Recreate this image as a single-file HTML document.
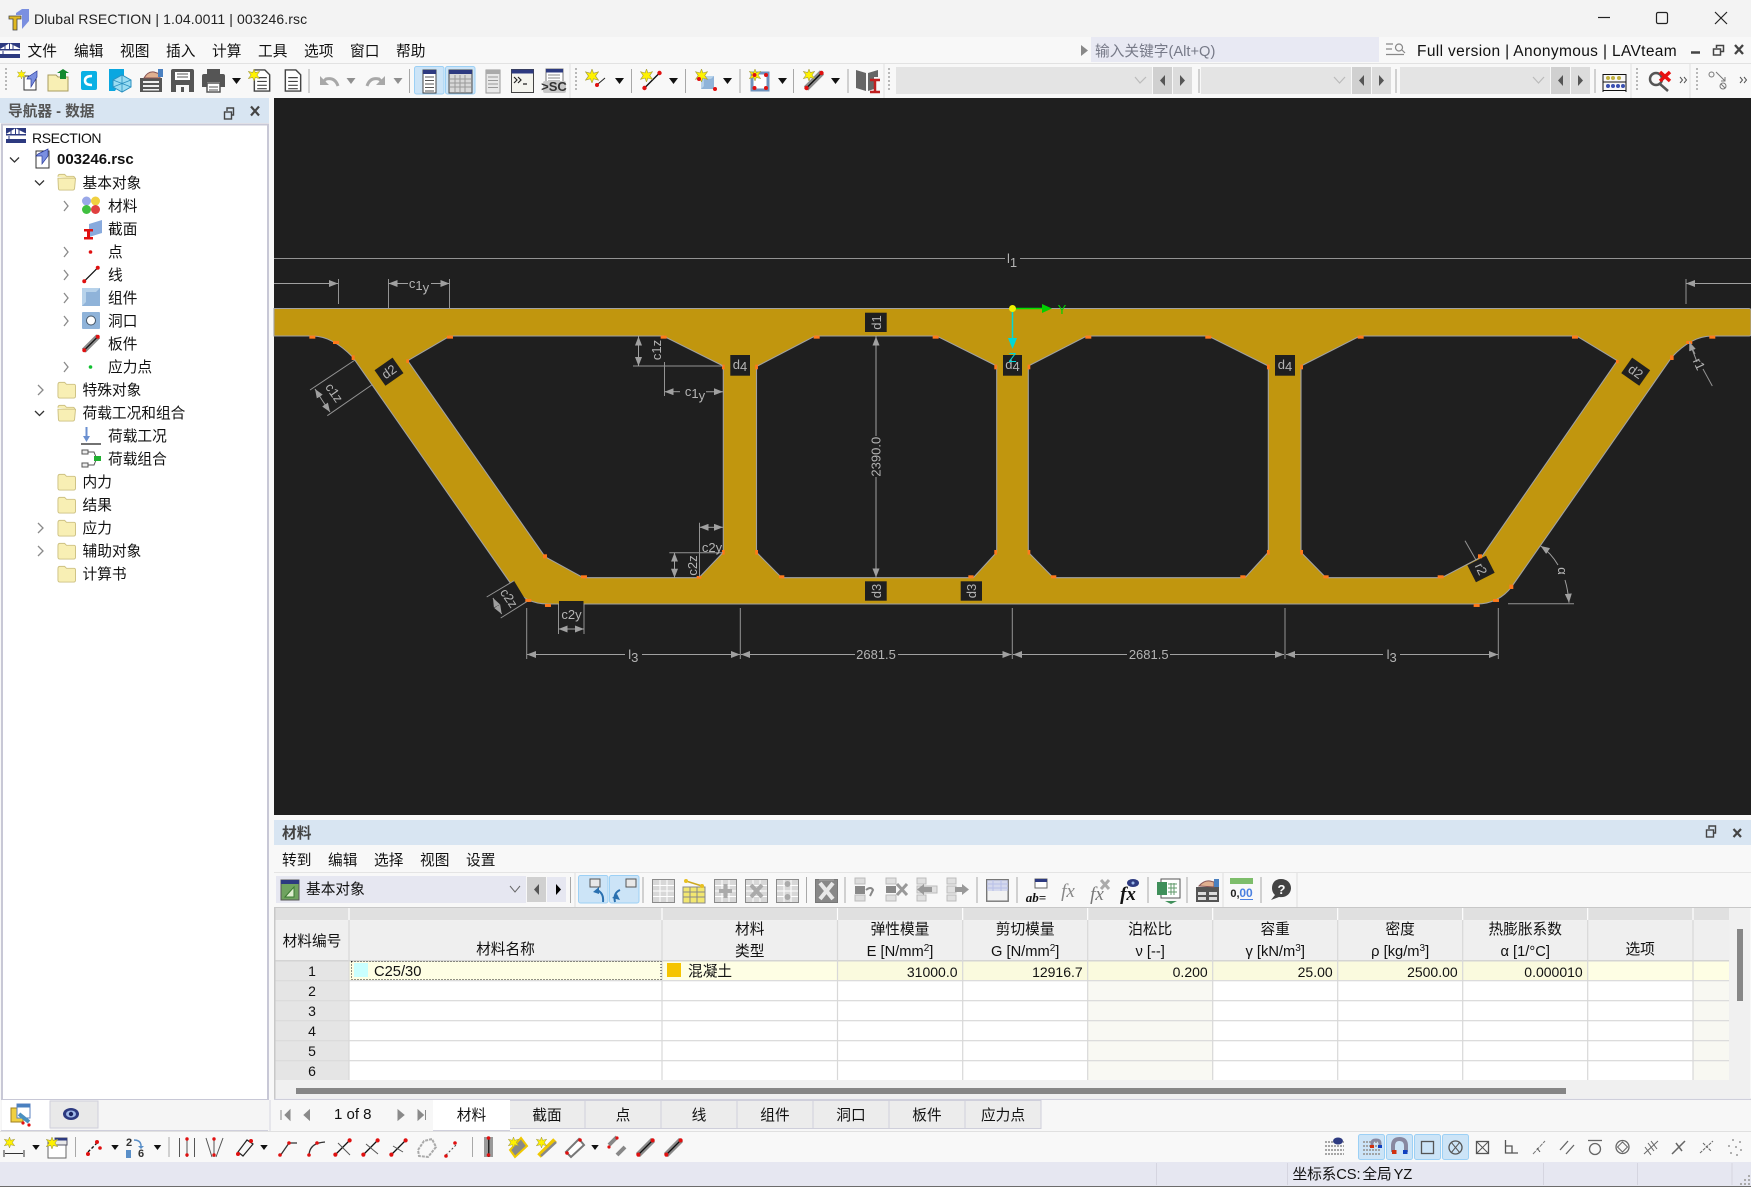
<!DOCTYPE html>
<html><head><meta charset="utf-8"><style>
html,body{margin:0;padding:0;background:#f8f8f8}
body{width:1751px;height:1187px;position:relative;overflow:hidden;font-family:"Liberation Sans","Noto Sans CJK SC",sans-serif;font-size:14.7px;color:#111}
svg.bg{position:absolute;left:0;top:0}
.t{position:absolute;white-space:nowrap;line-height:20px;height:20px;margin-top:1px}
.c{text-align:center}.r{text-align:right}
.n{font-size:14px}
.z{margin-top:0}
sup{font-size:10px;line-height:0;vertical-align:5px}
svg text{font-family:"Liberation Sans",sans-serif;fill:#b4b4b4;font-size:13px;text-anchor:middle}
.d{fill:none;stroke:#a0a0a0;stroke-width:1}
.da{fill:none;stroke:#a0a0a0;stroke-width:1;marker-end:url(#ar)}
</style></head><body>
<svg class="bg" width="1751" height="1187" viewBox="0 0 1751 1187">
<defs>
<marker id="ar" markerUnits="userSpaceOnUse" markerWidth="9" markerHeight="7" refX="9" refY="3.5" orient="auto"><path d="M0 0L9 3.5L0 7z" fill="#a0a0a0"/></marker>
<symbol id="star" viewBox="0 0 12 12"><path d="M6 0L7.3 3.6L11.5 2.5L9 6L11.5 9.5L7.3 8.4L6 12L4.7 8.4L.5 9.5L3 6L.5 2.5L4.7 3.6z" fill="#fff200" stroke="#a8a040" stroke-width=".6"/></symbol>
<symbol id="dn" viewBox="0 0 9 6"><path d="M0 0H9L4.5 6z" fill="#111"/></symbol>
<symbol id="fol" viewBox="0 0 20 18"><path d="M1 3.500Q1 1 3 1H8L10 3H18Q19.500 3 19.500 5V15.500Q19.500 17.500 17.500 17.500H3Q1 17.500 1 15.500z" fill="#f8efb4" stroke="#cdc183"/></symbol>
<symbol id="folo" viewBox="0 0 20 18"><path d="M1 3.500Q1 1 3 1H8L10 3H17Q18.500 3 18.500 5V6" fill="#f8efb4" stroke="#cdc183"/><path d="M1 5H19.500L18.500 15.500Q18.500 17.500 16.500 17.500H3Q1.500 17.500 1.500 15.500z" fill="#f8efb4" stroke="#cdc183"/></symbol>
<symbol id="br" viewBox="0 0 20 15"><rect width="20" height="15" fill="#2d3a80"/><path d="M0 6L9 .5V6zM10 .5L20 5.500V6H10zM0 7.500H20V11H0z" fill="#fff"/><path d="M5 1V6M13 1V6M3 8V11" stroke="#2d3a80"/></symbol>
<symbol id="tbl" viewBox="0 0 23 24"><rect x=".5" y=".5" width="22" height="23" fill="#d8d8d8" stroke="#8a8a8a"/><path d="M1 6.500H22M1 12H22M1 17.500H22M8 1V23M15 1V23" stroke="#fff"/></symbol>
<symbol id="doc" viewBox="0 0 18 24"><path d="M1 1H12L17 6V23H1z" fill="#fff" stroke="#444" stroke-width="1.500"/><path d="M4 9H14M4 13H14M4 17H14M4 20.500H14" stroke="#444" stroke-width="1.200"/></symbol>
<symbol id="mem" viewBox="0 0 20 20"><path d="M2 18L18 2" stroke="#111" stroke-width="1.400"/><circle cx="2.500" cy="17.500" r="2.200" fill="#e01010"/><circle cx="17.500" cy="2.500" r="2.200" fill="#e01010"/></symbol>
<symbol id="dmem" viewBox="0 0 20 20"><path d="M2 18L18 2" stroke="#8a8a8a" stroke-width="6"/><path d="M2 18L18 2" stroke="#111" stroke-width="1.400"/><circle cx="2.500" cy="17.500" r="2.200" fill="#e01010"/><circle cx="17.500" cy="2.500" r="2.200" fill="#e01010"/></symbol>
<symbol id="pw" viewBox="0 0 18 18"><rect width="18" height="18" fill="#8fb3d9"/><path d="M0 0H18L14 4H4V14L0 18z" fill="#b7d2ea"/></symbol>
</defs>

<!-- chrome -->
<rect width="1751" height="37" fill="#f3f3f3"/>
<rect y="37" width="1751" height="26" fill="#f8f8f8"/>
<rect y="63" width="1751" height="1" fill="#e2e2e2"/>
<rect x="1091" y="37" width="288" height="25" fill="#e8e9f3"/>
<path d="M1081 45L1088 50.500L1081 56z" fill="#888"/>
<!-- nav -->
<rect y="98" width="269" height="25" fill="#d8e5f2"/>
<rect x="2" y="124.500" width="266" height="975.500" fill="#fff" stroke="#c8c8d6" stroke-width="2"/>
<rect x="1" y="1100" width="268" height="31" fill="#f5f5f5"/>
<rect x="2" y="1100" width="48" height="30" fill="#fff"/>
<rect x="50" y="1101" width="48" height="27" fill="#e9e9e9" stroke="#cfcfdb"/>
<path d="M1 1130.500H268" stroke="#cfcfdb"/>
<!-- canvas -->
<rect x="274" y="98" width="1477" height="717" fill="#1f1f1f"/>
<path fill-rule="evenodd" fill="#c1960e" stroke="#a2a2a2" stroke-width="1.100" d="M274 308.500H1749Q1751 308.500 1751 311V334Q1751 336 1749 336H1712C1697 336 1684 344 1671.700 357.300L1511.700 586.700C1503 598 1492 604 1476.700 604H548C532 604 521 598 512.900 586.700L352.900 357.300C340 344 327 336 312.600 336H274Z
M407.700 360.700L450 336H663.300L723.300 366V552.300L699 577.700H583.300L545 556.700Z
M756.500 366.500L815 336H936.700L996.700 366V552.300L973.300 577.700H781.700L756.500 552.300Z
M1028.300 366L1086.700 336H1208.300L1268.300 366V552.300L1245 577.700H1053.300L1028.300 552.300Z
M1301 366L1360 336H1576.700L1617.300 360.700L1481.700 556.700L1441.700 577.700H1326L1301 552.300Z"/>
<!-- dark label boxes -->
<g fill="#1f1f1f">
<rect x="730.300" y="355" width="19.700" height="20.700"/><rect x="1003" y="355" width="19" height="20.700"/><rect x="1275" y="355" width="20" height="20.700"/>
<rect x="865" y="312.700" width="21.700" height="19.300"/><rect x="865" y="581.300" width="21.700" height="19.400"/><rect x="960.700" y="581.300" width="21.300" height="19.400"/>
<rect x="-11" y="-9.500" width="22" height="19" transform="translate(389 371.700) rotate(-35)"/>
<rect x="-11" y="-9.500" width="22" height="19" transform="translate(1635.700 371.700) rotate(35)"/>
<rect x="-10.500" y="-9.500" width="21" height="19" transform="translate(1481 569) rotate(-27)"/>
<path d="M514 580.700L526.700 601.700L500.700 618L486.700 597z"/>
<rect x="559" y="601" width="24.500" height="4"/>
</g>
<!-- orange markers -->
<g transform="translate(270 240) scale(.3333)" fill="#ff7a1c">
<rect x="118" y="287" width="18" height="9"/><rect x="189" y="303" width="18" height="9"/><rect x="245" y="346" width="9" height="14"/><rect x="409" y="358" width="8" height="11"/><rect x="531" y="287" width="18" height="9"/><rect x="1172" y="287" width="18" height="9"/><rect x="1356" y="374" width="8" height="14"/><rect x="1456" y="374" width="8" height="14"/><rect x="1456" y="930" width="8" height="14"/><rect x="1356" y="930" width="8" height="14"/><rect x="1280" y="1008" width="14" height="8"/><rect x="933" y="1006" width="18" height="9"/><rect x="819" y="943" width="12" height="12"/><rect x="766" y="1077" width="18" height="9"/><rect x="825" y="1092" width="18" height="9"/>
</g>
<g transform="translate(770 240) scale(.3333)" fill="#ff7a1c">
<rect x="131" y="287" width="18" height="9"/><rect x="488" y="287" width="18" height="9"/><rect x="673" y="374" width="8" height="14"/><rect x="773" y="374" width="8" height="14"/><rect x="946" y="287" width="18" height="9"/><rect x="1306" y="287" width="18" height="9"/><rect x="1491" y="374" width="8" height="14"/><rect x="1491" y="930" width="8" height="14"/><rect x="1411" y="1006" width="16" height="9"/><rect x="843" y="1006" width="16" height="9"/><rect x="773" y="930" width="8" height="14"/><rect x="673" y="930" width="8" height="14"/><rect x="595" y="1006" width="16" height="9"/><rect x="27" y="1006" width="16" height="9"/>
</g>
<g transform="translate(1270 240) scale(.3333)" fill="#ff7a1c">
<rect x="263" y="287" width="18" height="9"/><rect x="906" y="287" width="18" height="9"/><rect x="1038" y="360" width="8" height="10"/><rect x="91" y="374" width="8" height="14"/><rect x="91" y="930" width="8" height="14"/><rect x="160" y="1006" width="16" height="9"/><rect x="503" y="1006" width="18" height="9"/><rect x="624" y="943" width="12" height="12"/><rect x="718" y="1034" width="12" height="13"/><rect x="669" y="1077" width="18" height="9"/><rect x="611" y="1092" width="18" height="9"/><rect x="1200" y="346" width="11" height="14"/><rect x="1249" y="303" width="18" height="9"/><rect x="1318" y="287" width="18" height="9"/>
</g>
<!-- dimensions -->
<path class="d" stroke-opacity=".9" d="M274 258.500H1005M1020 258.500H1751M338.500 279V304M388.500 279V308M449.500 279V308M1686 279V304
M355 360L310 390M371.700 385L327.300 415.700M633 366H723M664.500 362V396M699.500 522.700V577M669.300 552.700H723
M526.700 608V659M740.300 608V659M1012.300 608V659M1285 608V659M1498.300 608V659M558.500 604V634M584 604V634M514 580.700L486.700 597M526.700 601.700L500.700 618
M1712.300 386L1703 369M1695 354L1691 346M1465 540.700L1476 560M1508 603.700H1574"/>
<path class="da" d="M274 283.500H338"/><path class="da" d="M1751 283.500H1686"/>
<path class="da" d="M408 283.500H388.500"/><path class="da" d="M431 283.500H449.500"/>
<path class="da" d="M322 400L315 389"/><path class="da" d="M322 400L330 412"/>
<path class="da" d="M638.500 351V336.500"/><path class="da" d="M638.500 351V366"/>
<path class="da" d="M680 391.700H664.500"/><path class="da" d="M706 391.700H723"/>
<path class="da" d="M711 527.300H699.500"/><path class="da" d="M711 527.300H723"/>
<path class="da" d="M674.500 565V552.700"/><path class="da" d="M674.500 565V577.700"/>
<path class="da" d="M497 606L493 598"/><path class="da" d="M497 606L501.700 614"/>
<path class="da" d="M571 629H558.500"/><path class="da" d="M571 629H584"/>
<path class="da" d="M876 436V336.500"/><path class="da" d="M876 477V577.500"/>
<path class="da" d="M625 654.500H527"/><path class="da" d="M642 654.500H740"/>
<path class="da" d="M855 654.500H741"/><path class="da" d="M898 654.500H1011.500"/>
<path class="da" d="M1127 654.500H1013"/><path class="da" d="M1170 654.500H1284"/>
<path class="da" d="M1383 654.500H1286"/><path class="da" d="M1400 654.500H1498"/>
<path class="da" d="M1697 362L1689.300 341.700"/>
<path class="da" d="M1558 565Q1551 553 1540.700 546"/><path class="da" d="M1565 580Q1568 590 1569 602.700"/>
<!-- axes -->
<path d="M1012.500 308.500H1044" stroke="#00e000" stroke-width="1.500"/><path d="M1042 304L1052 308.500L1042 313z" fill="#00d000"/>
<path d="M1012.500 308.500V340" stroke="#00d8d8" stroke-width="1.500"/><path d="M1008 338L1012.500 349L1017 338z" fill="#00d8d8"/>
<circle cx="1012.500" cy="308.500" r="3.500" fill="#f0f000"/>
<!-- canvas labels -->
<text x="1012" y="263" font-size="15">l<tspan dy="4" font-size="13">1</tspan></text>
<text x="419" y="288" font-size="14">c<tspan dy="2">1</tspan><tspan dy="2">y</tspan></text>
<text x="695" y="396" font-size="14">c<tspan dy="2">1</tspan><tspan dy="2">y</tspan></text>
<text x="712" y="552" font-size="14">c2y</text>
<text x="571.500" y="619" font-size="14">c2y</text>
<text transform="translate(330.600 395.300) rotate(55)" font-size="14">c1z</text>
<text transform="translate(661 350) rotate(-90)" font-size="14">c1z</text>
<text transform="translate(697 565.500) rotate(-90)" font-size="14">c2z</text>
<text transform="translate(505.300 600.600) rotate(55)" font-size="14">c2z</text>
<text transform="translate(391.600 375.400) rotate(-35)" font-size="14">d2</text>
<text transform="translate(1633.100 375.400) rotate(35)" font-size="14">d2</text>
<text transform="translate(1477 571) rotate(65)" font-size="14">r2</text>
<text transform="translate(1695 366) rotate(65)" font-size="14">r1</text>
<text transform="translate(1558 571) rotate(90)" font-size="15">α</text>
<text x="740" y="369" font-size="14">d<tspan dy="2">4</tspan></text>
<text x="1012.500" y="369" font-size="14">d<tspan dy="2">4</tspan></text>
<text x="1285" y="369" font-size="14">d<tspan dy="2">4</tspan></text>
<text transform="translate(881 322.500) rotate(-90)" font-size="14">d1</text>
<text transform="translate(881 591) rotate(-90)" font-size="14">d3</text>
<text transform="translate(976 591) rotate(-90)" font-size="14">d3</text>
<text transform="translate(880.500 456.700) rotate(-90)" font-size="13">2390.0</text>
<text x="876" y="659" font-size="13">2681.5</text>
<text x="1148.700" y="659" font-size="13">2681.5</text>
<text x="633.300" y="659" font-size="15">l<tspan dy="3" font-size="13">3</tspan></text>
<text x="1391.700" y="659" font-size="15">l<tspan dy="3" font-size="13">3</tspan></text>
<text x="1062" y="314" font-size="12" style="fill:#00d000">Y</text>
<text x="1012.500" y="362" font-size="13" style="fill:#00d8d8">Z</text>

<!-- panel -->
<rect x="274" y="820" width="1477" height="25" fill="#d8e5f2"/>
<rect x="274" y="872" width="1477" height="1" fill="#e4e4e4"/>
<rect x="276" y="876" width="250" height="27" fill="#e6e7f1"/>
<rect x="527" y="877" width="19" height="25" fill="#d0d0d0"/><rect x="547" y="877" width="19" height="25" fill="#e6e7f1"/>
<path d="M539 884L534 889.500L539 895z" fill="#555"/><path d="M556 884L561 889.500L556 895z" fill="#000"/>
<path d="M510 886L515 892L520 886" fill="none" stroke="#666"/>
<rect x="578.500" y="875.500" width="29.500" height="27.500" rx="2" fill="#cce4f7" stroke="#9cd0f5"/>
<rect x="609.500" y="875.500" width="29.500" height="27.500" rx="2" fill="#cce4f7" stroke="#9cd0f5"/>
<!-- table -->
<rect x="274" y="907" width="1456" height="191" fill="#f0f0f0"/>
<rect x="1730" y="907" width="20" height="191" fill="#f0f0f0"/>
<rect x="1737" y="929" width="6" height="72" fill="#868686"/>
<rect x="274" y="907" width="1477" height="1" fill="#c8c8c8"/>
<rect x="274" y="908" width="1455" height="12" fill="#e0e0e0"/>
<rect x="274" y="921" width="1455" height="39" fill="#efefef"/>
<rect x="275" y="961" width="74" height="119" fill="#e5e5e5"/>
<rect x="349" y="961" width="1380" height="119" fill="#fff"/>
<rect x="349" y="961" width="1380" height="19" fill="#fefee4"/>
<rect x="837.500" y="961" width="750" height="19" fill="#fafade"/>
<rect x="1087.700" y="981" width="125" height="99" fill="#f9f9f3"/>
<rect x="1693" y="981" width="36" height="99" fill="#f8f8f2"/>
<g fill="#dcdcdc">
<rect x="275" y="960" width="1454" height="1.500" fill="#d4d4d4"/><rect x="275" y="980" width="1454" height="1.300"/><rect x="275" y="1000" width="1454" height="1.300"/><rect x="275" y="1020" width="1454" height="1.300"/><rect x="275" y="1040" width="1454" height="1.300"/><rect x="275" y="1060" width="1454" height="1.300"/>
<rect x="274" y="907" width="1.500" height="193" fill="#c8c8c8"/>
</g>
<path d="M349 908V1080M662 908V1080M837.500 908V1080M962.700 908V1080M1087.700 908V1080M1212.700 908V1080M1337.700 908V1080M1462.700 908V1080M1587.700 908V1080M1693 908V1080" stroke="#d8d8d8" stroke-width="1.200" fill="none"/>
<path d="M349 908V920M662 908V920M837.500 908V920M962.700 908V920M1087.700 908V920M1212.700 908V920M1337.700 908V920M1462.700 908V920M1587.700 908V920M1693 908V920" stroke="#fff" stroke-width="1.200" fill="none"/>
<rect x="351.500" y="961.500" width="309.500" height="18" fill="none" stroke="#222" stroke-dasharray="1 2"/>
<rect x="354" y="963" width="14" height="14" fill="#c9ffff"/><rect x="667" y="963" width="14" height="14" fill="#f5c400"/>
<rect x="296" y="1088" width="1270" height="6" fill="#868686"/>
<path d="M274 1099.500H1751" stroke="#cfcfdb" stroke-width="1.500"/>
<!-- tabs -->
<rect x="271" y="1100" width="1480" height="31" fill="#f7f7f7"/>
<path d="M270 1100V1131" stroke="#d4d4de"/>
<g fill="#ececec" stroke="#cfcfdb"><rect x="509.500" y="1100.500" width="75.500" height="28"/><rect x="585" y="1100.500" width="76" height="28"/><rect x="661" y="1100.500" width="76" height="28"/><rect x="737" y="1100.500" width="76" height="28"/><rect x="813" y="1100.500" width="76" height="28"/><rect x="889" y="1100.500" width="76" height="28"/><rect x="965" y="1100.500" width="76" height="28"/></g>
<rect x="433" y="1100" width="77" height="31" fill="#fff"/>
<path d="M433 1130.500H510" stroke="#cfcfdb"/>
<path d="M281 1110V1120M290 1110L285 1115L290 1120zM309.500 1110L304 1115L309.500 1120zM398 1110L404 1115L398 1120zM418 1110L423.500 1115L418 1120zM425.500 1110V1120" fill="#8a8a8a" stroke="#8a8a8a" stroke-width="1"/>
<!-- lower toolbar -->
<rect y="1131.500" width="1751" height="31" fill="#f8f8f8"/>
<path d="M0 1131.500H1751" stroke="#e0e0e0"/>
<rect y="1162" width="1751" height="24" fill="#e6e7f1"/>
<rect y="1186" width="1751" height="1" fill="#6c6c6c"/>
<path d="M1156.500 1163V1185M1287.500 1163V1185M1543.500 1163V1185M1637.500 1163V1185M1732 1163V1185" stroke="#d5d5e0"/>
<path d="M1740 1183h2v2h-2zM1744 1183h2v2h-2zM1748 1183h2v2h-2zM1744 1179h2v2h-2zM1748 1179h2v2h-2zM1748 1175h2v2h-2z" fill="#aaa"/>

<!-- title icons -->
<g transform="translate(9 9)"><path d="M7 4L13 0H20V12L13 20V6H7z" fill="#7a8fe0"/><path d="M0 7H12V10H8V21H4V10H0z" fill="#e0b820" stroke="#444" stroke-width=".8"/></g>
<path d="M1598 17.500H1610" stroke="#222" stroke-width="1.200"/><rect x="1656.500" y="12.500" width="11" height="11" rx="1.500" fill="none" stroke="#222" stroke-width="1.200"/><path d="M1715 12L1727 24M1727 12L1715 24" stroke="#222" stroke-width="1.200"/>
<use href="#br" x="0" y="43" width="20" height="15"/>
<g stroke="#888" fill="none" stroke-width="1.200"><path d="M1386 44H1393M1386 49H1392M1386 54.500H1404"/><circle cx="1399" cy="47.500" r="3.500"/><path d="M1402 50L1405 53"/></g>
<path d="M1691 52.500H1700" stroke="#444" stroke-width="2.500"/>
<g fill="none" stroke="#444" stroke-width="1.500"><rect x="1713.500" y="49" width="7" height="6"/><path d="M1716.500 48V45.500H1723.500V51.500H1721"/><path d="M1735 45L1743 54M1743 45L1735 54" stroke-width="2.300"/></g>
<!-- nav header icons -->
<g fill="none" stroke="#444" stroke-width="1.400"><rect x="224.500" y="112" width="7" height="7"/><path d="M227 111V108H233.500V115H232"/><path d="M251 106.500L259 115.500M259 106.500L251 115.500" stroke-width="2.200"/></g>

<!-- main toolbar -->
<g fill="#b8b8b8"><path d="M5 68h2v2h-2zM5 72h2v2h-2zM5 76h2v2h-2zM5 80h2v2h-2zM5 84h2v2h-2zM5 88h2v2h-2zM575 68h2v2h-2zM575 72h2v2h-2zM575 76h2v2h-2zM575 80h2v2h-2zM575 84h2v2h-2zM575 88h2v2h-2zM888 68h2v2h-2zM888 72h2v2h-2zM888 76h2v2h-2zM888 80h2v2h-2zM888 84h2v2h-2zM888 88h2v2h-2zM1636 68h2v2h-2zM1636 72h2v2h-2zM1636 76h2v2h-2zM1636 80h2v2h-2zM1636 84h2v2h-2zM1636 88h2v2h-2zM1696 68h2v2h-2zM1696 72h2v2h-2zM1696 76h2v2h-2zM1696 80h2v2h-2zM1696 84h2v2h-2zM1696 88h2v2h-2z"/></g>
<path d="M309 69V93M409.500 69V93M631.500 69V93M685.500 69V93M740 69V93M793.500 69V93M848 69V93M1199 69V93M1396 69V93M1595 69V93" stroke="#a8a8a8"/>
<path d="M570 64V98M884 64V98M1631 64V98M1690 64V98" stroke="#e0e0e0"/>
<g transform="translate(20 70)"><path d="M4 6H16V20H4z" fill="#fff" stroke="#333"/><path d="M8 7L17 1V7L11 17V9H7z" fill="#7a8fe0" stroke="#2b3b9a" stroke-width=".7"/></g><use href="#star" x="17" y="70" width="9" height="9"/>
<g transform="translate(48 69)"><path d="M0 6H8L10 8H20V22H0z" fill="#f8efb4" stroke="#a89c60"/><path d="M12 10V4H9L15 0L21 4H18V10z" fill="#148a30"/></g>
<rect x="81" y="71" width="16" height="19" rx="2" fill="#0ab0e4"/><path d="M92 76Q85 76 85 80.500Q85 85 92 85" fill="none" stroke="#fff" stroke-width="2.500"/>
<g transform="translate(109 69)"><path d="M0 0H15V8L6 22H0z" fill="#0aa7e0"/><path d="M4 11L13 6L22 11V18L13 23L4 18z" fill="#9adcf2" stroke="#2a90c0"/><path d="M13 6V23M4 11L22 18M22 11L4 18" stroke="#2a90c0" stroke-width=".8"/></g>
<g transform="translate(140 69)"><rect y="9" width="22" height="14" fill="#555"/><rect x="3" y="12" width="16" height="2" fill="#eee"/><rect x="3" y="16" width="16" height="2" fill="#eee"/><rect x="3" y="20" width="16" height="1.500" fill="#eee"/><path d="M4 9Q8 2 14 3L20 5V9z" fill="#e0b090" stroke="#855"/><path d="M18 0H23V8H18z" fill="#4a80c0"/></g>
<g transform="translate(171 69)"><path d="M0 2Q0 0 2 0H21Q23 0 23 2V23H18V16H5V23H0z" fill="#555"/><rect x="4" y="3" width="15" height="8" fill="#fff"/><path d="M6 5H17M6 8H17" stroke="#555"/><rect x="10" y="18" width="3" height="5" fill="#555"/></g>
<g transform="translate(202 69)"><rect x="5" y="0" width="13" height="5" fill="#555"/><path d="M0 7Q0 5 2 5H21Q23 5 23 7V18H18V13H5V18H0z" fill="#555"/><rect x="5" y="14" width="13" height="9" fill="#fff" stroke="#555" stroke-width="1.500"/><path d="M7 18H16M7 21H16" stroke="#555"/></g>
<use href="#dn" x="232" y="78" width="9" height="6"/>
<use href="#doc" x="253" y="69" width="18" height="23"/><use href="#star" x="248" y="69" width="12" height="12"/>
<use href="#doc" x="284" y="69" width="18" height="23"/>
<path d="M338 86Q335 77 326 79L324 81" fill="none" stroke="#a8a8a8" stroke-width="3"/><path d="M320 76V85H329z" fill="#a8a8a8"/>
<path d="M367 86Q370 77 379 79L381 81" fill="none" stroke="#a8a8a8" stroke-width="3"/><path d="M385 76V85H376z" fill="#a8a8a8"/>
<use href="#dn" x="346.500" y="78" width="9" height="6" opacity=".45"/><use href="#dn" x="393.500" y="78" width="9" height="6" opacity=".45"/>
<rect x="414.500" y="66.500" width="29.500" height="27.500" rx="2" fill="#cce4f7" stroke="#9cd0f5"/><rect x="445.500" y="66.500" width="29.500" height="27.500" rx="2" fill="#cce4f7" stroke="#9cd0f5"/>
<g transform="translate(423 70)"><rect width="13" height="23" fill="#fff" stroke="#444"/><rect width="13" height="4" fill="#2d3a80"/><path d="M2 7H11M2 10.500H11M2 14H11M2 17.500H11M2 21H11" stroke="#555"/></g>
<g transform="translate(449 70)"><rect width="23" height="23" fill="#d8d8d8" stroke="#444"/><rect width="23" height="4" fill="#2d3a80"/><path d="M1 9H22M1 13H22M1 17H22M6 5V22M11 5V22M16 5V22" stroke="#999"/></g>
<g transform="translate(486 70)"><rect width="14" height="23" fill="#e8e8e8" stroke="#999"/><rect width="14" height="4" fill="#aaa"/><path d="M2 7H12M2 10.500H12M2 14H12M2 17.500H12" stroke="#999"/></g>
<g transform="translate(511 69)"><rect x=".5" y=".5" width="22" height="23" fill="#f4f4ee" stroke="#444"/><rect x=".5" y=".5" width="22" height="4" fill="#2d3a80"/><path d="M3 8L6 11L3 14M7 8L10 11L7 14M12 15H16" fill="none" stroke="#222" stroke-width="1.200"/></g>
<g transform="translate(543 69)"><rect x="3" y="0" width="17" height="16" fill="#fff" stroke="#777"/><rect x="3" y="0" width="17" height="3.500" fill="#2d3a80"/><path d="M5 6H17M5 9H17M5 12H17" stroke="#888"/><rect y="12" width="23" height="12" rx="2" fill="#c8c8c8"/></g>
<text x="554" y="91" font-size="11" font-weight="bold" style="fill:#333">&gt;SC</text>
<use href="#star" x="585" y="69" width="14" height="14"/><path d="M598 84L605 78" stroke="#222"/><circle cx="597" cy="85" r="2" fill="#e01010"/>
<use href="#dn" x="615" y="78" width="9" height="6"/>
<use href="#mem" x="642" y="70" width="20" height="21"/><use href="#star" x="640" y="69" width="13" height="13"/><use href="#dn" x="669" y="78" width="9" height="6"/>
<use href="#pw" x="700" y="76" width="15" height="13"/><use href="#star" x="695" y="69" width="13" height="13"/><circle cx="699" cy="79" r="2" fill="#e01010"/><circle cx="715" cy="89" r="2" fill="#e01010"/><use href="#dn" x="723" y="78" width="9" height="6"/>
<rect x="752" y="73" width="16" height="17" fill="#fff" stroke="#6f93bd" stroke-width="3"/><use href="#star" x="749" y="69" width="12" height="12"/><g fill="#e01010"><circle cx="754.500" cy="75" r="2"/><circle cx="766" cy="75" r="2"/><circle cx="754.500" cy="88" r="2"/><circle cx="766" cy="88" r="2"/></g><use href="#dn" x="778" y="78" width="9" height="6"/>
<use href="#dmem" x="804" y="70" width="20" height="21"/><use href="#star" x="803" y="69" width="12" height="12"/><use href="#dn" x="831" y="78" width="9" height="6"/>
<g transform="translate(856 69)"><path d="M0 1L10 4V22L0 19zM22 1L12 4V22L18 20V8H22z" fill="#666"/><path d="M14 11H24M19 11V22M14 23H24" stroke="#c02020" stroke-width="2.500"/></g>
<!-- combos -->
<g fill="#e4e4e4"><rect x="896" y="67" width="256" height="27"/><rect x="1201" y="67" width="150" height="27"/><rect x="1400" y="67" width="150" height="27"/></g>
<g fill="#d0d0d0"><rect x="1153" y="67" width="19" height="27"/><rect x="1352" y="67" width="19" height="27"/><rect x="1551" y="67" width="19" height="27"/></g>
<g fill="#dcdcdc"><rect x="1173" y="67" width="19" height="27"/><rect x="1372" y="67" width="19" height="27"/><rect x="1571" y="67" width="19" height="27"/></g>
<path d="M1135 77L1140 83L1146 77M1334 77L1339.500 83L1345 77M1533 77L1538.500 83L1544 77" fill="none" stroke="#bbb" stroke-width="1.200"/>
<path d="M1165 75L1160 80.500L1165 86zM1180 75L1185 80.500L1180 86zM1364 75L1359 80.500L1364 86zM1379 75L1384 80.500L1379 86zM1563 75L1558 80.500L1563 86zM1578 75L1583 80.500L1578 86z" fill="#555"/>
<g transform="translate(1603 74)"><path d="M0 0V18M23 0V18M0 .5H23M0 8H23M0 16.500H23" stroke="#111" fill="none"/><g fill="#c0b040"><circle cx="5" cy="4" r="2"/><circle cx="10" cy="4" r="2"/><circle cx="16" cy="4" r="2"/></g><g fill="#3a50b0"><circle cx="5" cy="12" r="2"/><circle cx="10" cy="12" r="2"/><circle cx="15" cy="12" r="2"/><circle cx="20" cy="12" r="2"/></g></g>
<g fill="none" stroke="#555" stroke-width="2.500"><circle cx="1656" cy="79" r="6"/><path d="M1660 84L1668 91"/></g><path d="M1660 72L1670 81M1670 72L1660 81" stroke="#e81010" stroke-width="3.500"/>
<path d="M1680 77L1682.500 80L1680 83M1684 77L1686.500 80L1684 83M1740 77L1742.500 80L1740 83M1744 77L1746.500 80L1744 83" fill="none" stroke="#555"/>
<g fill="none" stroke="#777"><circle cx="1711.500" cy="74.500" r="2.500"/><circle cx="1723" cy="86" r="3"/><path d="M1721 84L1725 88M1716 72L1725 81M1725 77V81H1721"/></g>

<!-- tree icons -->
<use href="#br" x="6" y="128" width="20" height="15"/>
<g transform="translate(34 149)"><path d="M2 2H15V19H2z" fill="#fff" stroke="#333"/><path d="M4 5L14 0V7L8 15V7H2z" fill="#7a8fe0" stroke="#2b3b9a" stroke-width=".7"/></g>
<g fill="none" stroke="#333" stroke-width="1.300"><path d="M10 157.500L14.500 162L19 157.500M35 180.500L39.500 185L44 180.500M35 411L39.500 415.500L44 411"/></g>
<g fill="none" stroke="#8a8a8a" stroke-width="1.300"><path d="M64 201L68 206L64 211M64 247L68 252L64 257M64 270L68 275L64 280M64 293L68 298L64 303M64 316L68 321L64 326M64 362L68 367L64 372M38 385L43 390L38 395M38 523L43 528L38 533M38 546L43 551L38 556"/></g>
<use href="#folo" x="57" y="173" width="19" height="18"/><use href="#fol" x="57" y="381" width="19" height="18"/><use href="#folo" x="57" y="404" width="19" height="18"/><use href="#fol" x="57" y="473" width="19" height="18"/><use href="#fol" x="57" y="496" width="19" height="18"/><use href="#fol" x="57" y="519" width="19" height="18"/><use href="#fol" x="57" y="542" width="19" height="18"/><use href="#fol" x="57" y="565" width="19" height="18"/>
<g><ellipse cx="86.500" cy="201" rx="4.500" ry="4.500" fill="#9aa8e8"/><ellipse cx="95.500" cy="201" rx="4.500" ry="4.500" fill="#f0d040"/><ellipse cx="86.500" cy="209.500" rx="4.500" ry="4.500" fill="#40c040"/><ellipse cx="95.500" cy="209.500" rx="4.500" ry="4.500" fill="#e04040"/></g>
<g transform="translate(84 220)"><path d="M5 4L18 0V13L5 17z" fill="#88aadd"/><path d="M0 9H9V11.500H6V17H9V19.500H0V17H3V11.500H0z" fill="#e01010"/></g>
<circle cx="90.500" cy="252" r="1.800" fill="#e01010"/>
<use href="#mem" x="82" y="265" width="18" height="19"/>
<use href="#pw" x="82" y="288" width="18" height="18"/>
<rect x="82" y="312" width="18" height="17" rx="1" fill="#8fb3d9"/><circle cx="91" cy="320.500" r="4.500" fill="#fff" stroke="#456"/>
<use href="#dmem" x="82" y="334" width="18" height="19"/>
<circle cx="90.500" cy="367" r="1.800" fill="#10c030"/>
<path d="M86.500 427V440" stroke="#6a8fd0" stroke-width="2"/><path d="M83 436L86.500 442L90 436z" fill="#6a8fd0"/><path d="M81 444H101" stroke="#444" stroke-width="1.500"/>
<g fill="none" stroke="#555"><rect x="82" y="450" width="6" height="4" fill="#eee"/><rect x="82" y="463" width="6" height="4" fill="#eee"/><path d="M88 452H94L96 457M88 465H94L96 460"/></g><rect x="94" y="456" width="7" height="5" fill="#20b030"/>
<!-- nav bottom -->
<g transform="translate(11 1104)"><path d="M0 4H8L10 6H12V18H0z" fill="#f0d040" stroke="#a08020"/><rect x="6" y="0" width="13" height="14" fill="#fff" stroke="#5a80c0"/><rect x="6" y="0" width="13" height="3.500" fill="#4a80c0"/><path d="M8 10L18 18" stroke="#4a90c0" stroke-width="4"/><circle cx="18" cy="21" r="1.600" fill="#e01010"/><circle cx="12" cy="19" r="1.600" fill="#e01010"/></g>
<g><ellipse cx="71" cy="1114" rx="8" ry="6" fill="#2d3a80"/><ellipse cx="71" cy="1114" rx="5" ry="3.500" fill="#a0b8e8"/><circle cx="71" cy="1114" r="2.200" fill="#1a2460"/></g>

<!-- panel icons -->
<g fill="none" stroke="#444" stroke-width="1.400"><rect x="1706.500" y="830" width="7" height="7"/><path d="M1709 829V826H1715.500V833H1714"/><path d="M1733.500 829L1741 837M1741 829L1733.500 837" stroke-width="2.200"/></g>
<g transform="translate(281 880)"><rect width="18" height="20" fill="#6fa35f" stroke="#555"/><rect width="18" height="4" fill="#2d3a80"/><path d="M4 17L13 7V17z" fill="#dfeecf" stroke="#3a7a30"/></g>
<g fill="none" stroke="#555"><rect x="590" y="879" width="10" height="8" fill="#e8e8e8"/><rect x="626" y="879" width="10" height="8" fill="#e8e8e8"/></g><path d="M597 890Q604 893 603 902M620 890Q613 893 615 902" fill="none" stroke="#2a70b0" stroke-width="2"/><path d="M593 892L599 887L599 894zM620 900L612 898L617 894z" fill="#2a70b0"/>
<use href="#tbl" x="652" y="879" width="23" height="24"/>
<g transform="translate(683 879)"><rect y="8" width="22" height="16" fill="#f2e770" stroke="#888"/><path d="M0 13H22M0 18H22M7 8V24M14 8V24" stroke="#888"/><path d="M3 2L19 7" stroke="#cca820" stroke-width="1.500"/><circle cx="3" cy="2" r="2" fill="#e8c020"/><circle cx="19" cy="7" r="2" fill="#e8c020"/></g>
<use href="#tbl" x="714" y="879" width="23" height="24"/><path d="M725.500 884V898M719 891H732" stroke="#aaa" stroke-width="4"/>
<use href="#tbl" x="745" y="879" width="23" height="24"/><path d="M751 885L762 897M762 885L751 897" stroke="#aaa" stroke-width="4"/>
<use href="#tbl" x="776" y="879" width="23" height="24"/><circle cx="787.500" cy="884" r="3" fill="#aaa"/><circle cx="787.500" cy="897" r="3" fill="#aaa"/>
<path d="M643 877V903M806.500 877V903M845 877V903M977 877V903M1017 877V903M1148 877V903M1187 877V903M1261 877V903M570.500 877V903" stroke="#a8a8a8"/>
<path d="M575 873V907M1223 873V907M1297 873V907" stroke="#dedede"/>
<rect x="815.500" y="879.500" width="22" height="23" fill="#888" stroke="#777"/><path d="M820 883L833 899M833 883L820 899" stroke="#e8e8e8" stroke-width="4"/><path d="M819 880L834 880" stroke="#aaa"/>
<g fill="#ddd" stroke="#bbb"><rect x="855" y="878" width="10" height="6"/><rect x="855" y="895" width="10" height="6"/></g><rect x="855" y="886" width="10" height="8" fill="#888"/><path d="M866 890Q871 886 873 890L870 896" fill="none" stroke="#888" stroke-width="2"/>
<g fill="#e0e0e0" stroke="#bbb"><rect x="886" y="878" width="10" height="6"/><rect x="886" y="895" width="10" height="6"/><rect x="917" y="878" width="9" height="6"/><rect x="917" y="895" width="9" height="6"/><rect x="917" y="886" width="20" height="7"/><rect x="947" y="878" width="9" height="6"/><rect x="947" y="895" width="9" height="6"/><rect x="947" y="886" width="9" height="7"/></g>
<rect x="886" y="886" width="10" height="7" fill="#888"/><path d="M897 884L907 895M907 884L897 895" stroke="#999" stroke-width="3"/>
<path d="M917 889.500L924 884V887H932V892H924V895z" fill="#999"/><path d="M969 889.500L962 884V887H955V892H962V895z" fill="#999"/>
<g transform="translate(986 879)"><rect x=".7" y=".7" width="21.500" height="21.500" fill="#f2f2f2" stroke="#777" stroke-width="1.400"/><path d="M1 5H22M1 9H22M7 1V12M15 1V12" stroke="#b8c0e8"/><rect x="1" y="1" width="21" height="11" fill="#b8c0e8" opacity=".5"/></g>
<text x="1036" y="902" style="font-family:'Liberation Serif',serif;font-style:italic;font-weight:bold;fill:#111;font-size:13px">ab=</text><rect x="1035" y="879" width="12" height="9" fill="#fff" stroke="#666"/><rect x="1035" y="879" width="12" height="3" fill="#2d3a80"/>
<text x="1068" y="897" style="font-family:'Liberation Serif',serif;font-style:italic;fill:#888;font-size:19px">fx</text>
<text x="1097" y="900" style="font-family:'Liberation Serif',serif;font-style:italic;fill:#777;font-size:19px">fx</text><path d="M1101 880L1109 889M1109 880L1101 889" stroke="#aaa" stroke-width="3"/>
<text x="1128" y="900" style="font-family:'Liberation Serif',serif;font-style:italic;font-weight:bold;fill:#111;font-size:19px">fx</text><ellipse cx="1133" cy="883" rx="6" ry="4" fill="#2d3a80"/><circle cx="1133" cy="883" r="1.500" fill="#9ab8e8"/>
<g transform="translate(1157 879)"><rect x="4" width="19" height="19" fill="#fff" stroke="#555"/><path d="M11 5H20M11 9H20M11 13H20M14 4V16M17 4V16" stroke="#5f9a6a"/><rect y="3" width="10" height="13" fill="#3f8f5a"/><path d="M8 22L14 25L20 22z" fill="#3f8f5a"/></g>
<g transform="translate(1196 878)"><rect y="9" width="23" height="15" fill="#555"/><rect x="2" y="14" width="8" height="3" fill="#ddd"/><rect x="13" y="14" width="8" height="3" fill="#ddd"/><rect x="2" y="19" width="8" height="3" fill="#ddd"/><rect x="13" y="19" width="8" height="3" fill="#ddd"/><path d="M3 8Q8 2 14 3L18 4V9z" fill="#e0b090" stroke="#855"/><rect x="18" y="1" width="5" height="8" fill="#4a80c0"/></g>
<rect x="1230" y="878" width="23" height="6" fill="#7dbd6a"/><text x="1235" y="897" font-weight="bold" style="fill:#222;font-size:11px">0,</text><text x="1246" y="897" font-weight="bold" style="fill:#4a80e0;font-size:12px">00</text><path d="M1240 899.500H1253" stroke="#4a80e0"/>
<path d="M1281 879C1275 879 1272 883 1272 888C1272 892 1274 894 1275 895L1271 900L1279 897C1287 898 1291 893 1291 888C1291 883 1287 879 1281 879z" fill="#444"/><text x="1281.500" y="894" font-weight="bold" style="fill:#fff;font-size:13px">?</text>

<!-- lower toolbar icons -->
<path d="M75.500 1137V1157M169 1137V1157M472.500 1137V1157" stroke="#a8a8a8"/>
<use href="#star" x="4" y="1137" width="11" height="11"/><path d="M4 1150V1157M24 1150V1157M5 1153.500H23" stroke="#333"/><use href="#dn" x="32" y="1145" width="8" height="5"/>
<g transform="translate(48 1138)"><rect y="3" width="18" height="17" fill="#fff" stroke="#666"/><rect x="7" width="12" height="7" fill="#e8e8e8" stroke="#556"/><rect x="7" width="12" height="2.500" fill="#2d3a80"/></g><use href="#star" x="46" y="1137" width="12" height="12"/>
<path d="M88 1152L98 1142" stroke="#111" stroke-width="1.400" stroke-dasharray="3 2"/><circle cx="88" cy="1154" r="2" fill="#e01010"/><circle cx="97" cy="1142" r="2" fill="#e01010"/><circle cx="100" cy="1148" r="1.800" fill="#e01010"/>
<use href="#dn" x="111" y="1145" width="8" height="5"/>
<text x="129" y="1146" font-weight="bold" style="fill:#333;font-size:11px">2</text><text x="141" y="1157" font-weight="bold" style="fill:#333;font-size:11px">6</text><rect x="126" y="1150" width="5" height="8" fill="#5a8fc8"/><path d="M134 1140Q141 1140 141 1146" fill="none" stroke="#5a8fc8" stroke-width="1.500"/><path d="M138 1146H144L141 1149z" fill="#5a8fc8"/>
<use href="#dn" x="153.500" y="1145" width="8" height="5"/>
<g fill="none" stroke="#555"><path d="M179.500 1138V1157M187 1138V1157M194.500 1138V1157"/><path d="M206 1138L212 1157M214 1138V1157M223 1138L216 1157"/></g><g fill="#e01010"><circle cx="187" cy="1139" r="1.700"/><circle cx="187" cy="1155" r="1.700"/><circle cx="214" cy="1139" r="1.700"/><circle cx="214" cy="1155" r="1.700"/></g>
<g fill="none" stroke="#222"><path d="M238 1152L247 1140L253 1144L243 1156z" stroke-width="1.200"/></g><circle cx="238" cy="1154" r="2" fill="#e01010"/><circle cx="251" cy="1141" r="2" fill="#e01010"/><use href="#dn" x="260" y="1145" width="8" height="5"/>
<g fill="none" stroke="#333" stroke-width="1.300"><path d="M280 1156L289 1143H297"/><path d="M309 1156Q309 1143 325 1142"/></g><g fill="#e01010"><circle cx="280" cy="1155" r="1.800"/><circle cx="289" cy="1143" r="1.800"/><circle cx="309" cy="1155" r="1.800"/><circle cx="317" cy="1143" r="1.800"/></g>
<use href="#mem" x="333" y="1138" width="19" height="19"/><path d="M338 1143L350 1155" stroke="#555"/>
<use href="#mem" x="361" y="1138" width="19" height="19"/><path d="M366 1144L378 1154" stroke="#555"/>
<use href="#mem" x="389" y="1138" width="19" height="19"/><path d="M393 1146L403 1152" stroke="#555"/>
<g fill="none" stroke="#aaa" stroke-width="2"><path d="M418 1150L424 1141L432 1139L436 1147L428 1157L419 1156z" stroke-dasharray="3 1"/></g>
<path d="M446 1155L456 1145" stroke="#444" stroke-dasharray="2 2"/><circle cx="446" cy="1156" r="1.800" fill="#e01010"/><circle cx="455" cy="1143" r="1.800" fill="#e01010"/>
<g><rect x="484" y="1137" width="9" height="20" fill="#999"/><rect x="488" y="1137" width="1.500" height="20" fill="#222"/><circle cx="488.500" cy="1138" r="1.800" fill="#e01010"/><circle cx="488.500" cy="1155" r="1.800" fill="#e01010"/></g>
<path d="M510 1150L521 1138L527 1146L515 1157z" fill="#888" stroke="#f0c800" stroke-width="2"/><use href="#star" x="508" y="1137" width="11" height="11"/>
<path d="M539 1156L555 1140" stroke="#f0c800" stroke-width="5"/><path d="M541 1156L556 1142" stroke="#888" stroke-width="2.500"/><use href="#star" x="536" y="1137" width="11" height="11"/>
<path d="M566 1152L579 1139L584 1145L571 1157z" fill="#fff" stroke="#777" stroke-width="2"/><circle cx="567" cy="1153" r="1.800" fill="#e01010"/><circle cx="580" cy="1140" r="1.800" fill="#e01010"/><use href="#dn" x="591" y="1145" width="8" height="5"/>
<path d="M609 1145L617 1137M617 1155L625 1147" stroke="#888" stroke-width="4"/><circle cx="609" cy="1147" r="1.600" fill="#e01010"/><circle cx="617" cy="1138" r="1.600" fill="#e01010"/>
<use href="#dmem" x="636" y="1138" width="19" height="19"/><use href="#dmem" x="664" y="1138" width="19" height="19"/>
<!-- right lower -->
<g fill="none" stroke="#9a9a9a" stroke-dasharray="2 1" stroke-width="1.800"><path d="M1325 1142H1344M1325 1146H1344M1325 1150H1344M1325 1154H1344"/></g><ellipse cx="1338" cy="1141" rx="5" ry="3.500" fill="#2d3a80"/>
<g fill="#cce4f7" stroke="#9cd0f5"><rect x="1358.500" y="1134.500" width="26" height="25" rx="2"/><rect x="1386.500" y="1134.500" width="26" height="25" rx="2"/><rect x="1414.500" y="1134.500" width="26" height="25" rx="2"/><rect x="1442.500" y="1134.500" width="26" height="25" rx="2"/></g>
<g fill="none" stroke="#9a9a9a" stroke-dasharray="2 1" stroke-width="1.800"><path d="M1363 1142H1380M1363 1146H1380M1363 1150H1380M1363 1154H1380"/></g><path d="M1372 1147V1143Q1372 1140 1376 1140Q1380 1140 1380 1143V1147" fill="none" stroke="#8888a0" stroke-width="3"/><rect x="1370" y="1145" width="4" height="3" fill="#d03010"/><rect x="1378" y="1145" width="4" height="3" fill="#1040c0"/>
<path d="M1393 1152V1146Q1393 1139 1399.500 1139Q1406 1139 1406 1146V1152" fill="none" stroke="#8888a0" stroke-width="4"/><rect x="1392" y="1150" width="4.500" height="4" fill="#d03010"/><rect x="1403" y="1150" width="4.500" height="4" fill="#1040c0"/>
<rect x="1421.500" y="1141.500" width="12" height="12" fill="none" stroke="#555" stroke-width="1.300"/>
<circle cx="1455.500" cy="1147.500" r="6.500" fill="none" stroke="#555" stroke-width="1.300"/><path d="M1451 1142L1460 1153M1460 1142L1451 1153" stroke="#555"/>
<rect x="1476.500" y="1141.500" width="12" height="12" fill="none" stroke="#555" stroke-width="1.300"/><path d="M1477 1142L1488 1153M1488 1142L1477 1153" stroke="#555"/>
<path d="M1505.500 1140V1153H1518M1505 1146H1512V1153" fill="none" stroke="#555" stroke-width="1.300"/>
<path d="M1533 1154L1545 1141" stroke="#777" stroke-dasharray="4 1"/><path d="M1537 1148L1540 1152" stroke="#555"/>
<path d="M1560 1150L1568 1141M1566 1154L1574 1145" stroke="#666" stroke-width="1.300"/>
<path d="M1588 1140.500H1602" stroke="#666" stroke-width="1.300"/><circle cx="1595" cy="1149" r="5.500" fill="none" stroke="#666" stroke-width="1.300"/>
<circle cx="1622.500" cy="1147" r="6.500" fill="none" stroke="#666" stroke-width="1.300"/><path d="M1622.500 1142L1627.500 1147L1622.500 1152L1617.500 1147z" fill="none" stroke="#666"/>
<path d="M1644 1154L1658 1141M1648 1143L1654 1151M1645 1147L1651 1155M1651 1141L1657 1149" stroke="#666"/>
<path d="M1672 1154L1685 1141M1676 1143L1682 1151" stroke="#666" stroke-width="1.500"/>
<path d="M1700 1153L1713 1141M1703 1143L1711 1151" stroke="#666" stroke-dasharray="3 1"/>
<g fill="#999"><circle cx="1733" cy="1140" r="1"/><circle cx="1740" cy="1142" r="1"/><circle cx="1729" cy="1146" r="1"/><circle cx="1736" cy="1147" r="1"/><circle cx="1741" cy="1150" r="1"/><circle cx="1731" cy="1153" r="1"/><circle cx="1737" cy="1155" r="1"/></g>
</svg>

<!-- TEXT -->
<div class="t z" style="left:34px;top:9px;font-size:14px;color:#222;letter-spacing:.1px">Dlubal RSECTION | 1.04.0011 | 003246.rsc</div>
<div class="t" style="left:27.500px;top:41px">文件</div><div class="t" style="left:74px;top:41px">编辑</div><div class="t" style="left:120px;top:41px">视图</div><div class="t" style="left:166px;top:41px">插入</div><div class="t" style="left:212px;top:41px">计算</div><div class="t" style="left:258px;top:41px">工具</div><div class="t" style="left:304px;top:41px">选项</div><div class="t" style="left:350px;top:41px">窗口</div><div class="t" style="left:396px;top:41px">帮助</div>
<div class="t" style="left:1095px;top:41px;color:#777a88">输入关键字(Alt+Q)</div>
<div class="t" style="left:1417px;top:41px;font-size:15.500px;letter-spacing:.35px">Full version | Anonymous | LAVteam</div>
<div class="t" style="left:8px;top:101px;font-weight:bold;color:#555">导航器 - 数据</div>
<div class="t" style="left:32px;top:127px;font-size:14px;letter-spacing:-.4px">RSECTION</div>
<div class="t z" style="left:57px;top:150px;font-weight:bold;font-size:15px">003246.rsc</div>
<div class="t" style="left:82.500px;top:173px">基本对象</div>
<div class="t" style="left:108px;top:196px">材料</div><div class="t" style="left:108px;top:219px">截面</div><div class="t" style="left:108px;top:242px">点</div><div class="t" style="left:108px;top:265px">线</div><div class="t" style="left:108px;top:288px">组件</div><div class="t" style="left:108px;top:311px">洞口</div><div class="t" style="left:108px;top:334px">板件</div><div class="t" style="left:108px;top:357px">应力点</div>
<div class="t" style="left:82.500px;top:380px">特殊对象</div><div class="t" style="left:82.500px;top:403px">荷载工况和组合</div>
<div class="t" style="left:108px;top:426px">荷载工况</div><div class="t" style="left:108px;top:449px">荷载组合</div>
<div class="t" style="left:82.500px;top:472px">内力</div><div class="t" style="left:82.500px;top:495px">结果</div><div class="t" style="left:82.500px;top:518px">应力</div><div class="t" style="left:82.500px;top:541px">辅助对象</div><div class="t" style="left:82.500px;top:564px">计算书</div>

<div class="t" style="left:282px;top:823px;font-weight:bold;color:#444">材料</div>
<div class="t" style="left:282px;top:850px">转到</div><div class="t" style="left:328px;top:850px">编辑</div><div class="t" style="left:374px;top:850px">选择</div><div class="t" style="left:420px;top:850px">视图</div><div class="t" style="left:466px;top:850px">设置</div>
<div class="t" style="left:306px;top:879px">基本对象</div>

<div class="t c" style="left:275px;width:74px;top:931px">材料编号</div>
<div class="t c" style="left:349px;width:313px;top:939px">材料名称</div>
<div class="t c" style="left:662px;width:175.500px;top:919px">材料</div><div class="t c" style="left:662px;width:175.500px;top:941px">类型</div>
<div class="t c" style="left:837.500px;width:125px;top:919px">弹性模量</div><div class="t c n" style="left:837.500px;width:125px;top:941px;font-size:14.700px">E [N/mm<sup>2</sup>]</div>
<div class="t c" style="left:962.700px;width:125px;top:919px">剪切模量</div><div class="t c n" style="left:962.700px;width:125px;top:941px;font-size:14.700px">G [N/mm<sup>2</sup>]</div>
<div class="t c" style="left:1087.700px;width:125px;top:919px">泊松比</div><div class="t c n" style="left:1087.700px;width:125px;top:941px;font-size:14.700px">ν [--]</div>
<div class="t c" style="left:1212.700px;width:125px;top:919px">容重</div><div class="t c n" style="left:1212.700px;width:125px;top:941px;font-size:14.700px">γ [kN/m<sup>3</sup>]</div>
<div class="t c" style="left:1337.700px;width:125px;top:919px">密度</div><div class="t c n" style="left:1337.700px;width:125px;top:941px;font-size:14.700px">ρ [kg/m<sup>3</sup>]</div>
<div class="t c" style="left:1462.700px;width:125px;top:919px">热膨胀系数</div><div class="t c n" style="left:1462.700px;width:125px;top:941px;font-size:14.700px">α [1/°C]</div>
<div class="t c" style="left:1587.700px;width:105px;top:939px">选项</div>

<div class="t c n z" style="left:275px;width:74px;top:961px">1</div><div class="t c n z" style="left:275px;width:74px;top:981px">2</div><div class="t c n z" style="left:275px;width:74px;top:1001px">3</div><div class="t c n z" style="left:275px;width:74px;top:1021px">4</div><div class="t c n z" style="left:275px;width:74px;top:1041px">5</div><div class="t c n z" style="left:275px;width:74px;top:1061px">6</div>
<div class="t n" style="left:374px;top:961px;font-size:14.700px">C25/30</div>
<div class="t" style="left:688px;top:961px">混凝土</div>
<div class="t r n" style="left:837.500px;width:120px;top:961px">31000.0</div>
<div class="t r n" style="left:962.700px;width:120px;top:961px">12916.7</div>
<div class="t r n" style="left:1087.700px;width:120px;top:961px">0.200</div>
<div class="t r n" style="left:1212.700px;width:120px;top:961px">25.00</div>
<div class="t r n" style="left:1337.700px;width:120px;top:961px">2500.00</div>
<div class="t r n" style="left:1462.700px;width:120px;top:961px">0.000010</div>

<div class="t n z" style="left:334px;top:1105px;font-size:15px">1 of 8</div>
<div class="t c" style="left:433px;width:77px;top:1105px">材料</div><div class="t c" style="left:509px;width:76px;top:1105px">截面</div><div class="t c" style="left:585px;width:76px;top:1105px">点</div><div class="t c" style="left:661px;width:76px;top:1105px">线</div><div class="t c" style="left:737px;width:76px;top:1105px">组件</div><div class="t c" style="left:813px;width:76px;top:1105px">洞口</div><div class="t c" style="left:889px;width:76px;top:1105px">板件</div><div class="t c" style="left:965px;width:76px;top:1105px">应力点</div>
<div class="t z" style="left:1292.500px;top:1165px;word-spacing:-2px;letter-spacing:-.1px">坐标系CS: 全局 YZ</div>
</body></html>
